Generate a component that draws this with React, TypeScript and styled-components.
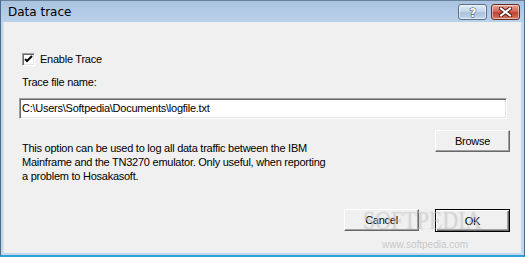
import React, {FC} from 'react';
import styled, {createGlobalStyle} from 'styled-components';

const GlobalStyle = createGlobalStyle`
  html, body {
    margin: 0;
    padding: 0;
    background: #f0f0f0;
  }
  body {
    font-family: "Liberation Sans", Arial, sans-serif;
    font-size: 11px;
    color: #000;
  }
`;

const Window = styled.div`
  position: relative;
  width: 525px;
  height: 257px;
  box-sizing: border-box;
  display: flex;
  flex-direction: column;
  background: #bcd2ea;
  border: 1px solid #4c6a8a;
  border-top-color: #6b819a;
  border-bottom: 2px solid #2ba3d6;
  overflow: hidden;
`;

const TitleBar = styled.div`
  height: 21px;
  display: flex;
  align-items: center;
  padding: 0 4px 0 7px;
  background: linear-gradient(#a9c3e0, #bad1ea);
`;

const Title = styled.div`
  flex: 1;
  font-family: "DejaVu Sans", sans-serif;
  font-size: 12px;
  color: #000;
`;

const CaptionButton = styled.div<{$danger?: boolean}>`
  width: 27px;
  height: 14px;
  margin-left: 4px;
  border: 1px solid ${p => (p.$danger ? '#6b2a22' : '#5a6f88')};
  border-radius: 3px;
  display: flex;
  align-items: center;
  justify-content: center;
  background: ${p =>
    p.$danger
      ? 'linear-gradient(#e6a49a 0%, #d1695a 45%, #c2412f 55%, #d07a68 100%)'
      : 'linear-gradient(#e0ebf6 0%, #c5d7ea 45%, #a9c1dc 55%, #c3d6ea 100%)'};
  box-shadow: inset 0 0 0 1px rgba(255, 255, 255, 0.5);
`;

const Frame = styled.div`
  flex: 1;
  display: flex;
  border-left: 2px solid #c2d6ec;
  border-right: 3px solid #c2d6ec;
  border-bottom: 2px solid #c2d6ec;
`;

const Body = styled.div`
  flex: 1;
  display: flex;
  flex-direction: column;
  padding: 0 11px 21px 15px;
  background: #f0f0f0;
  border-left: 1px solid #d8dfe8;
  letter-spacing: -0.25px;
`;

const CheckRow = styled.label`
  display: flex;
  align-items: center;
  margin: 31px 0 0 3px;
  height: 13px;
  line-height: 13px;
`;

const CheckBox = styled.span`
  width: 13px;
  height: 13px;
  box-sizing: border-box;
  margin-right: 5px;
  background: #fff;
  border-top: 1px solid #a0a0a0;
  border-left: 1px solid #a0a0a0;
  border-right: 1px solid #fff;
  border-bottom: 1px solid #fff;
  box-shadow: inset 1px 1px 0 #696969, inset -1px -1px 0 #e3e3e3;
  display: flex;
  align-items: center;
  justify-content: center;
`;

const FieldLabel = styled.div`
  margin: 9px 0 0 3px;
  line-height: 14px;
`;

const TextField = styled.div`
  margin-top: 9px;
  width: 488px;
  height: 21px;
  box-sizing: border-box;
  padding: 0 2px;
  background: #fff;
  border-top: 1px solid #a0a0a0;
  border-left: 1px solid #a0a0a0;
  border-right: 1px solid #fff;
  border-bottom: 1px solid #fff;
  box-shadow: inset 1px 1px 0 #696969, inset -1px -1px 0 #e3e3e3;
  line-height: 19px;
  white-space: nowrap;
`;

const InfoRow = styled.div`
  display: flex;
  align-items: flex-start;
  justify-content: space-between;
  margin-top: 11px;
`;

const Description = styled.p`
  margin: 11px 0 0 3px;
  width: 310px;
  line-height: 14px;
`;

const Button = styled.div<{$default?: boolean}>`
  width: 75px;
  height: ${p => (p.$default ? 23 : 22)}px;
  box-sizing: border-box;
  display: flex;
  align-items: center;
  justify-content: center;
  background: #f0f0f0;
  border: 1px solid;
  border-color: ${p => (p.$default ? '#000' : '#fff #696969 #696969 #fff')};
  box-shadow: ${p =>
    p.$default
      ? 'inset 1px 1px 0 #fff, inset -1px -1px 0 #696969, inset -2px -2px 0 #a0a0a0'
      : 'inset -1px -1px 0 #a0a0a0'};
`;

const Footer = styled.div`
  margin-top: auto;
  display: flex;
  justify-content: flex-end;
  gap: 16px;
`;

const Watermark = styled.div`
  position: absolute;
  left: 362px;
  top: 206px;
  font-family: "Liberation Serif", serif;
  font-size: 22px;
  line-height: 24px;
  transform: scaleY(1.15);
  transform-origin: top left;
  color: rgba(255, 255, 255, 0.2);
  text-shadow: 0 0 1px rgba(160, 160, 160, 0.5);
  pointer-events: none;
`;

const WatermarkUrl = styled.div`
  position: absolute;
  left: 381px;
  top: 238px;
  font-family: "Liberation Sans", sans-serif;
  font-size: 10px;
  color: rgba(170, 170, 170, 0.6);
  pointer-events: none;
`;

const HelpIcon: FC = () => (
  <svg width="14" height="14" viewBox="0 0 14 14">
    <text
      x="7"
      y="12"
      textAnchor="middle"
      fontFamily="DejaVu Sans"
      fontWeight="bold"
      fontSize="12"
      fill="#fff"
      stroke="#2c3e55"
      strokeWidth="0.9"
      paintOrder="stroke"
    >
      ?
    </text>
  </svg>
);

const CloseIcon: FC = () => (
  <svg width="13" height="10" viewBox="0 0 13 10">
    <path d="M2 1.5 L11 8.5 M11 1.5 L2 8.5" stroke="#4a1a14" strokeWidth="4" strokeLinecap="square" />
    <path d="M2 1.5 L11 8.5 M11 1.5 L2 8.5" stroke="#fff" strokeWidth="2" strokeLinecap="square" />
  </svg>
);

const CheckMark: FC = () => (
  <svg width="9" height="9" viewBox="0 0 9 9">
    <path d="M1 4 L3 6 L8 1" fill="none" stroke="#000" strokeWidth="2" />
  </svg>
);

const App: FC = () => {
  return (
    <>
      <GlobalStyle />
      <Window>
        <TitleBar>
          <Title>Data trace</Title>
          <CaptionButton><HelpIcon /></CaptionButton>
          <CaptionButton $danger><CloseIcon /></CaptionButton>
        </TitleBar>
        <Frame>
          <Body>
            <CheckRow>
              <CheckBox><CheckMark /></CheckBox>
              Enable Trace
            </CheckRow>
            <FieldLabel>Trace file name:</FieldLabel>
            <TextField>C:\Users\Softpedia\Documents\logfile.txt</TextField>
            <InfoRow>
              <Description>
                This option can be used to log all data traffic between the IBM
                Mainframe and the TN3270 emulator. Only useful, when reporting
                a problem to Hosakasoft.
              </Description>
              <Button>Browse</Button>
            </InfoRow>
            <Footer>
              <Button>Cancel</Button>
              <Button $default>OK</Button>
            </Footer>
          </Body>
        </Frame>
        <Watermark>SOFTPEDIA</Watermark>
        <WatermarkUrl>www.softpedia.com</WatermarkUrl>
      </Window>
    </>
  );
};

export default App;
